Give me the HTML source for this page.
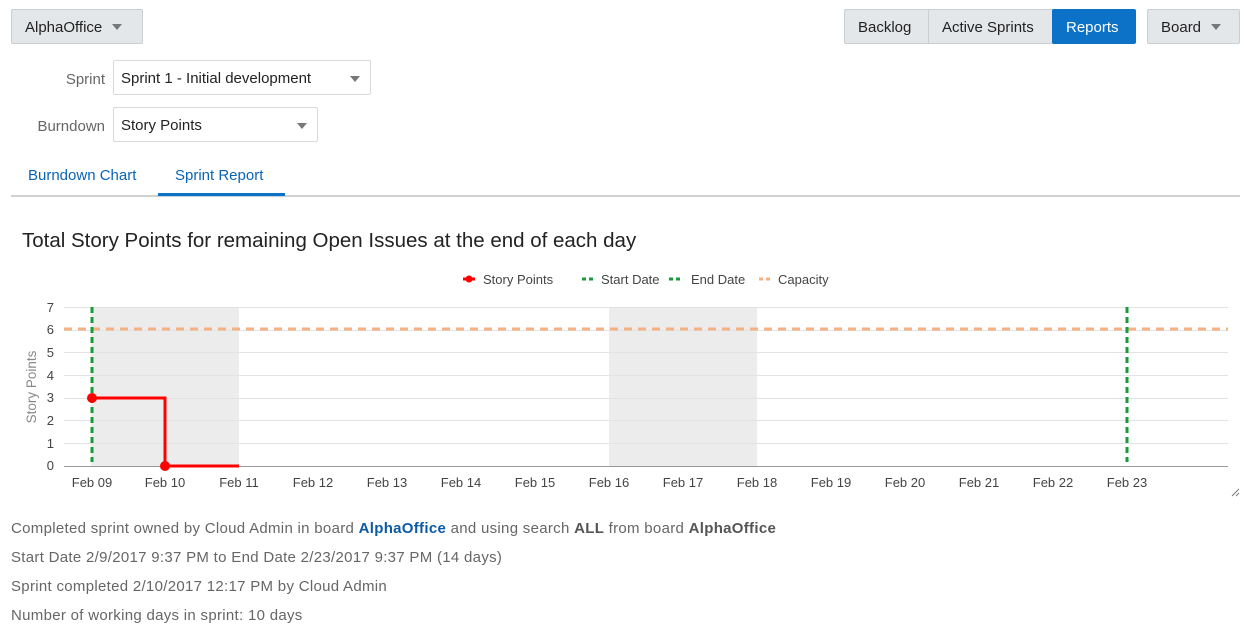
<!DOCTYPE html>
<html><head><meta charset="utf-8"><style>
*{box-sizing:border-box;margin:0;padding:0}
body{width:1253px;height:641px;background:#fff;font-family:"Liberation Sans",sans-serif;color:#333;position:relative;overflow:hidden}
.btn{position:absolute;top:9px;height:35px;background:#e4e7ea;border:1px solid #c9ced3;border-radius:2px;font-size:15px;color:#222;line-height:35px;padding:0 13px}
.tri{display:inline-block;width:0;height:0;border-left:5px solid transparent;border-right:5px solid transparent;border-top:6px solid #777;vertical-align:middle;margin-left:10px;margin-top:-2px}
.lbl{position:absolute;font-size:15px;color:#666;text-align:right;width:95px;left:10px}
.sel{position:absolute;left:113px;height:35px;border:1px solid #dadada;border-radius:2px;font-size:15px;color:#222;line-height:35px;padding-left:7px}
.sel .tri{position:absolute;right:10px;top:15px;margin:0}
.tab{position:absolute;top:167px;font-size:15px;color:#0a64b4}
.foot{position:absolute;left:11px;font-size:15px;color:#666;letter-spacing:0.3px}
</style></head><body>
<div class="btn" style="left:11px;width:132px">AlphaOffice<span class="tri"></span></div>
<div class="btn" style="left:844px;width:85px;border-radius:2px 0 0 2px">Backlog</div>
<div class="btn" style="left:928px;width:125px;border-radius:0">Active Sprints</div>
<div class="btn" style="left:1052px;width:84px;background:#0b72c8;border-color:#0b72c8;color:#fff">Reports</div>
<div class="btn" style="left:1147px;width:93px">Board<span class="tri"></span></div>

<div class="lbl" style="top:71px">Sprint</div>
<div class="sel" style="top:60px;width:258px">Sprint 1 - Initial development<span class="tri"></span></div>
<div class="lbl" style="top:118px">Burndown</div>
<div class="sel" style="top:107px;width:205px">Story Points<span class="tri"></span></div>

<div class="tab" style="left:28px">Burndown Chart</div>
<div class="tab" style="left:175px">Sprint Report</div>
<div style="position:absolute;left:11px;top:195px;width:1229px;height:2px;background:#d0d0d0"></div>
<div style="position:absolute;left:158px;top:193px;width:127px;height:3px;background:#0b72c8"></div>

<div style="position:absolute;left:22px;top:229px;font-size:20.5px;color:#222">Total Story Points for remaining Open Issues at the end of each day</div>

<svg style="position:absolute;left:0;top:0" width="1253" height="641" font-family="Liberation Sans, sans-serif">
<g font-size="13" fill="#444">
<line x1="463" y1="279" x2="475" y2="279" stroke="#f00" stroke-width="3"/><circle cx="469" cy="279" r="3.5" fill="#f00"/>
<text x="483" y="284">Story Points</text>
<line x1="582" y1="279" x2="594" y2="279" stroke="#1a9a3a" stroke-width="3" stroke-dasharray="4,3"/>
<text x="601" y="284">Start Date</text>
<line x1="669" y1="279" x2="681" y2="279" stroke="#1a9a3a" stroke-width="3" stroke-dasharray="4,3"/>
<text x="691" y="284">End Date</text>
<line x1="759" y1="279" x2="771" y2="279" stroke="#f4b183" stroke-width="3" stroke-dasharray="4,3"/>
<text x="778" y="284">Capacity</text>
</g>
<rect x="91" y="307" width="148" height="159" fill="#ececec"/>
<rect x="609" y="307" width="148" height="159" fill="#ececec"/>
<g stroke="#e3e3e3" stroke-width="1">
<line x1="64" y1="307.5" x2="1228" y2="307.5"/>
<line x1="64" y1="330.5" x2="1228" y2="330.5"/>
<line x1="64" y1="352.5" x2="1228" y2="352.5"/>
<line x1="64" y1="375.5" x2="1228" y2="375.5"/>
<line x1="64" y1="398.5" x2="1228" y2="398.5"/>
<line x1="64" y1="420.5" x2="1228" y2="420.5"/>
<line x1="64" y1="443.5" x2="1228" y2="443.5"/>
</g>
<line x1="64" y1="466.5" x2="1228" y2="466.5" stroke="#999"/>
<line x1="64" y1="329" x2="1228" y2="329" stroke="#f4b183" stroke-width="3" stroke-dasharray="8,6"/>
<line x1="92" y1="307" x2="92" y2="462" stroke="#1a9a3a" stroke-width="3" stroke-dasharray="6,4"/>
<line x1="1127" y1="307" x2="1127" y2="462" stroke="#1a9a3a" stroke-width="3" stroke-dasharray="6,4"/>
<polyline points="92,398 165,398 165,466 239,466" fill="none" stroke="#f00" stroke-width="3"/>
<circle cx="92" cy="398" r="5" fill="#f00"/><circle cx="165" cy="466" r="5" fill="#f00"/>
<g font-size="13" fill="#444" text-anchor="end">
<text x="54" y="312">7</text><text x="54" y="334">6</text><text x="54" y="357">5</text><text x="54" y="380">4</text><text x="54" y="402">3</text><text x="54" y="425">2</text><text x="54" y="448">1</text><text x="54" y="470">0</text>
</g>
<text transform="translate(36,387) rotate(-90)" text-anchor="middle" font-size="13.5" fill="#888">Story Points</text>
<g font-size="13" fill="#444" text-anchor="middle">
<text x="92" y="487">Feb 09</text><text x="165" y="487">Feb 10</text><text x="239" y="487">Feb 11</text><text x="313" y="487">Feb 12</text><text x="387" y="487">Feb 13</text><text x="461" y="487">Feb 14</text><text x="535" y="487">Feb 15</text><text x="609" y="487">Feb 16</text><text x="683" y="487">Feb 17</text><text x="757" y="487">Feb 18</text><text x="831" y="487">Feb 19</text><text x="905" y="487">Feb 20</text><text x="979" y="487">Feb 21</text><text x="1053" y="487">Feb 22</text><text x="1127" y="487">Feb 23</text>
</g>
<path d="M1232 496 L1239 489 M1236 496 L1239 493" stroke="#777" stroke-width="1"/>
</svg>

<div class="foot" style="top:520px">Completed sprint owned by Cloud Admin in board <b style="color:#0a5aa6">AlphaOffice</b> and using search <b style="color:#555">ALL</b> from board <b style="color:#555">AlphaOffice</b></div>
<div class="foot" style="top:549px">Start Date 2/9/2017 9:37 PM to End Date 2/23/2017 9:37 PM (14 days)</div>
<div class="foot" style="top:578px">Sprint completed 2/10/2017 12:17 PM by Cloud Admin</div>
<div class="foot" style="top:607px">Number of working days in sprint: 10 days</div>
</body></html>
